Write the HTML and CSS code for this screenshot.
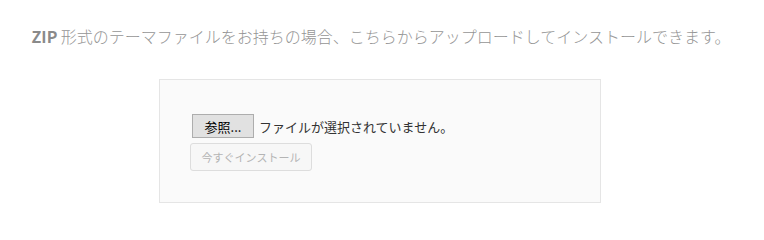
FILE: index.html
```html
<!DOCTYPE html>
<html lang="ja">
<head>
<meta charset="utf-8">
<title>テーマのアップロード</title>
<link rel="stylesheet" href="styles.css">
</head>
<body>
<div class="upload-theme">
  <p class="install-help"><strong>ZIP</strong> 形式のテーマファイルをお持ちの場合、こちらからアップロードしてインストールできます。</p>
  <form class="upload-form">
    <div class="file-row">
      <span class="browse-btn">参照...</span>
      <span class="file-label">ファイルが選択されていません。</span>
    </div>
    <div class="submit-row">
      <span class="install-btn">今すぐインストール</span>
    </div>
  </form>
</div>
</body>
</html>
```

FILE: styles.css
```css
html, body {
  margin: 0;
  padding: 0;
  background: #ffffff;
}

body {
  font-family: "Noto Sans CJK JP", "Noto Sans", sans-serif;
}

.upload-theme {
  display: flex;
  flex-direction: column;
  align-items: center;
  padding-right: 4px;
}

.install-help {
  margin: 0;
  padding-top: 24px;
  padding-left: 2px;
  font-size: 16px;
  line-height: 24px;
  font-weight: 300;
  color: #959595;
  text-align: center;
  white-space: nowrap;
}

.install-help strong {
  color: #8a8a8a;
  font-weight: 700;
}

.upload-form {
  margin-top: 31px;
  width: 442px;
  height: 124px;
  box-sizing: border-box;
  background: #fafafa;
  border: 1px solid #e5e5e5;
  padding: 34px 30px 0 30px;
  display: flex;
  flex-direction: column;
}

.file-row {
  display: flex;
  align-items: center;
  padding-left: 2px;
  height: 24px;
}

.browse-btn {
  box-sizing: border-box;
  width: 62px;
  height: 24px;
  display: flex;
  align-items: center;
  justify-content: center;
  background: #e1e1e1;
  border: 1px solid #adadad;
  font-size: 13px;
  color: #000;
}

.file-label {
  margin-left: 5px;
  font-size: 13px;
  color: #333;
}

.submit-row {
  margin-top: 5px;
  display: flex;
}

.install-btn {
  box-sizing: border-box;
  width: 122px;
  height: 28px;
  display: flex;
  align-items: center;
  justify-content: center;
  border: 1px solid #dddddd;
  border-radius: 3px;
  background: #f7f7f7;
  color: #b4b4b4;
  font-size: 11px;
}
```
